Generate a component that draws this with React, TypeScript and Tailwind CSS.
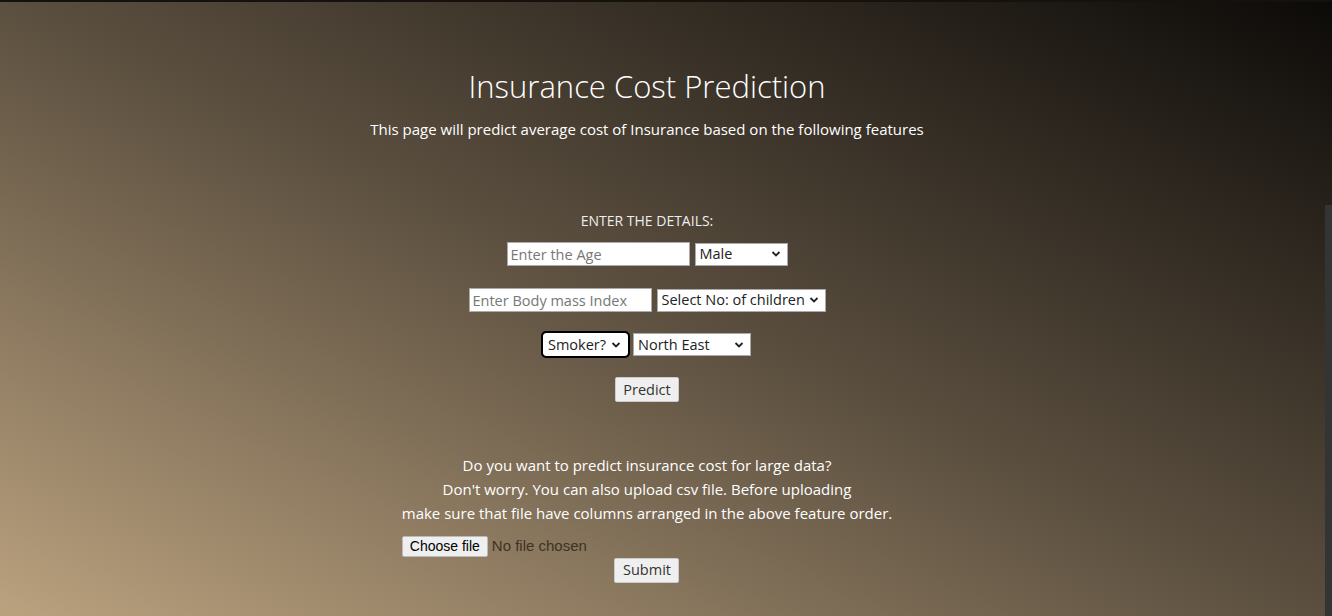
import React from "react";

const sans = "font-['Open_Sans',sans-serif]";

function Select({ w, label, focused }: { w: string; label: string; focused?: boolean }) {
  return (
    <div
      className={`${w} h-[23px] bg-white flex items-center justify-between pl-[4px] pr-[6px] text-[14.5px] text-[#222] ${
        focused ? "outline-2 outline-black rounded-[3px] border border-white" : "border border-[#aaa]"
      }`}
    >
      <span className="whitespace-nowrap">{label}</span>
      <svg width="10" height="8" viewBox="0 0 10 8" className="shrink-0">
        <path d="M1.5 2 L5 5.5 L8.5 2" fill="none" stroke="#222" strokeWidth="1.8" />
      </svg>
    </div>
  );
}

function TextBox({ placeholder }: { placeholder: string }) {
  return (
    <input
      placeholder={placeholder}
      className={`w-[183px] h-[24px] bg-white border border-[#aaa] px-[3px] text-[14.5px] placeholder:text-[#777] outline-none ${sans}`}
    />
  );
}

export default function App() {
  return (
    <div className="relative w-[1332px] h-[616px] overflow-hidden bg-[linear-gradient(to_top_right,#bba27f,#5b4f3f_50%,#0c0a08)]">
      <div className="h-[2px] bg-[#15110d]" />
      <div className={`w-[1294px] flex flex-col items-center text-white ${sans}`}>
        <h1 className="mt-[64px] text-[31px] font-light leading-[40px]">Insurance Cost Prediction</h1>
        <p className="mt-[11px] text-[15px] font-medium leading-[24px]">
          This page will predict average cost of Insurance based on the following features
        </p>

        <p className="mt-[68px] text-[14px] text-[#eee] leading-[24px]">ENTER THE DETAILS:</p>
        <div className="mt-[9px] flex items-center gap-[5px]">
          <TextBox placeholder="Enter the Age" />
          <Select w="w-[93px]" label="Male" />
        </div>
        <div className="mt-[22px] flex items-center gap-[5px]">
          <TextBox placeholder="Enter Body mass Index" />
          <Select w="w-[169px]" label="Select No: of children" />
        </div>
        <div className="mt-[21px] flex items-center gap-[5px]">
          <Select w="w-[85px]" label="Smoker?" focused />
          <Select w="w-[118px]" label="North East" />
        </div>
        <button className="mt-[21px] w-[64px] h-[25px] bg-[#efefef] border border-[#ccc] rounded-[2px] text-[14.5px] text-[#333]">
          Predict
        </button>

        <div className="mt-[51px] w-fit flex flex-col">
          <p className="text-center text-[15px] font-medium leading-[24px]">
            Do you want to predict insurance cost for large data?
            <br />
            Don't worry. You can also upload csv file. Before uploading
            <br />
            make sure that file have columns arranged in the above feature order.
          </p>
          <div className="mt-[10px] flex items-center font-['Liberation_Sans',sans-serif] text-[14px]">
            <span className="h-[21px] px-[7px] flex items-center bg-[#efefef] border border-[#bbb] rounded-[2px] text-black">
              Choose file
            </span>
            <span className="ml-[4px] text-[15px] text-[#3d3226]">No file chosen</span>
          </div>
          <button className="self-center w-[65px] h-[25px] bg-[#efefef] border border-[#ccc] rounded-[2px] text-[14.5px] text-[#333]">
            Submit
          </button>
        </div>
      </div>
      <div className="absolute right-0 top-[205px] bottom-0 w-[7px] bg-[#343434]" />
    </div>
  );
}
